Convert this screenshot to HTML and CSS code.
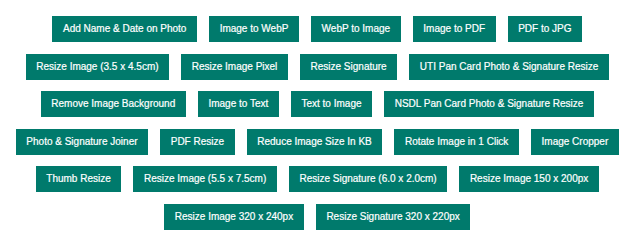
FILE: index.html
```html
<!DOCTYPE html>
<html lang="en">
<head>
<meta charset="utf-8">
<title>Tools</title>
<link rel="stylesheet" href="styles.css">
</head>
<body>
<nav class="tools">
  <a class="tool" href="#">Add Name &amp; Date on Photo</a>
  <a class="tool" href="#">Image to WebP</a>
  <a class="tool" href="#">WebP to Image</a>
  <a class="tool" href="#">Image to PDF</a>
  <a class="tool" href="#">PDF to JPG</a>
  <a class="tool" href="#">Resize Image (3.5 x 4.5cm)</a>
  <a class="tool" href="#">Resize Image Pixel</a>
  <a class="tool" href="#">Resize Signature</a>
  <a class="tool" href="#">UTI Pan Card Photo &amp; Signature Resize</a>
  <a class="tool" href="#">Remove Image Background</a>
  <a class="tool" href="#">Image to Text</a>
  <a class="tool" href="#">Text to Image</a>
  <a class="tool" href="#">NSDL Pan Card Photo &amp; Signature Resize</a>
  <a class="tool" href="#">Photo &amp; Signature Joiner</a>
  <a class="tool" href="#">PDF Resize</a>
  <a class="tool" href="#">Reduce Image Size In KB</a>
  <a class="tool" href="#">Rotate Image in 1 Click</a>
  <a class="tool" href="#">Image Cropper</a>
  <a class="tool" href="#">Thumb Resize</a>
  <a class="tool" href="#">Resize Image (5.5 x 7.5cm)</a>
  <a class="tool" href="#">Resize Signature (6.0 x 2.0cm)</a>
  <a class="tool" href="#">Resize Image 150 x 200px</a>
  <a class="tool" href="#">Resize Image 320 x 240px</a>
  <a class="tool" href="#">Resize Signature 320 x 220px</a>
</nav>
</body>
</html>
```

FILE: styles.css
```css
html, body {
  margin: 0;
  background: #ffffff;
}

body {
  padding: 16px 8px 8px 11.6px;
  font-family: "Liberation Sans", Arial, sans-serif;
}

.tools {
  display: flex;
  flex-wrap: wrap;
  justify-content: center;
  gap: 11.6px 12px;
}

.tool {
  display: block;
  background: #007a6c;
  color: #ffffff;
  font-size: 10px;
  line-height: 12px;
  padding: 7px 10.6px;
  text-decoration: none;
  white-space: nowrap;
  -webkit-text-stroke: 0.2px #ffffff;
}
```
